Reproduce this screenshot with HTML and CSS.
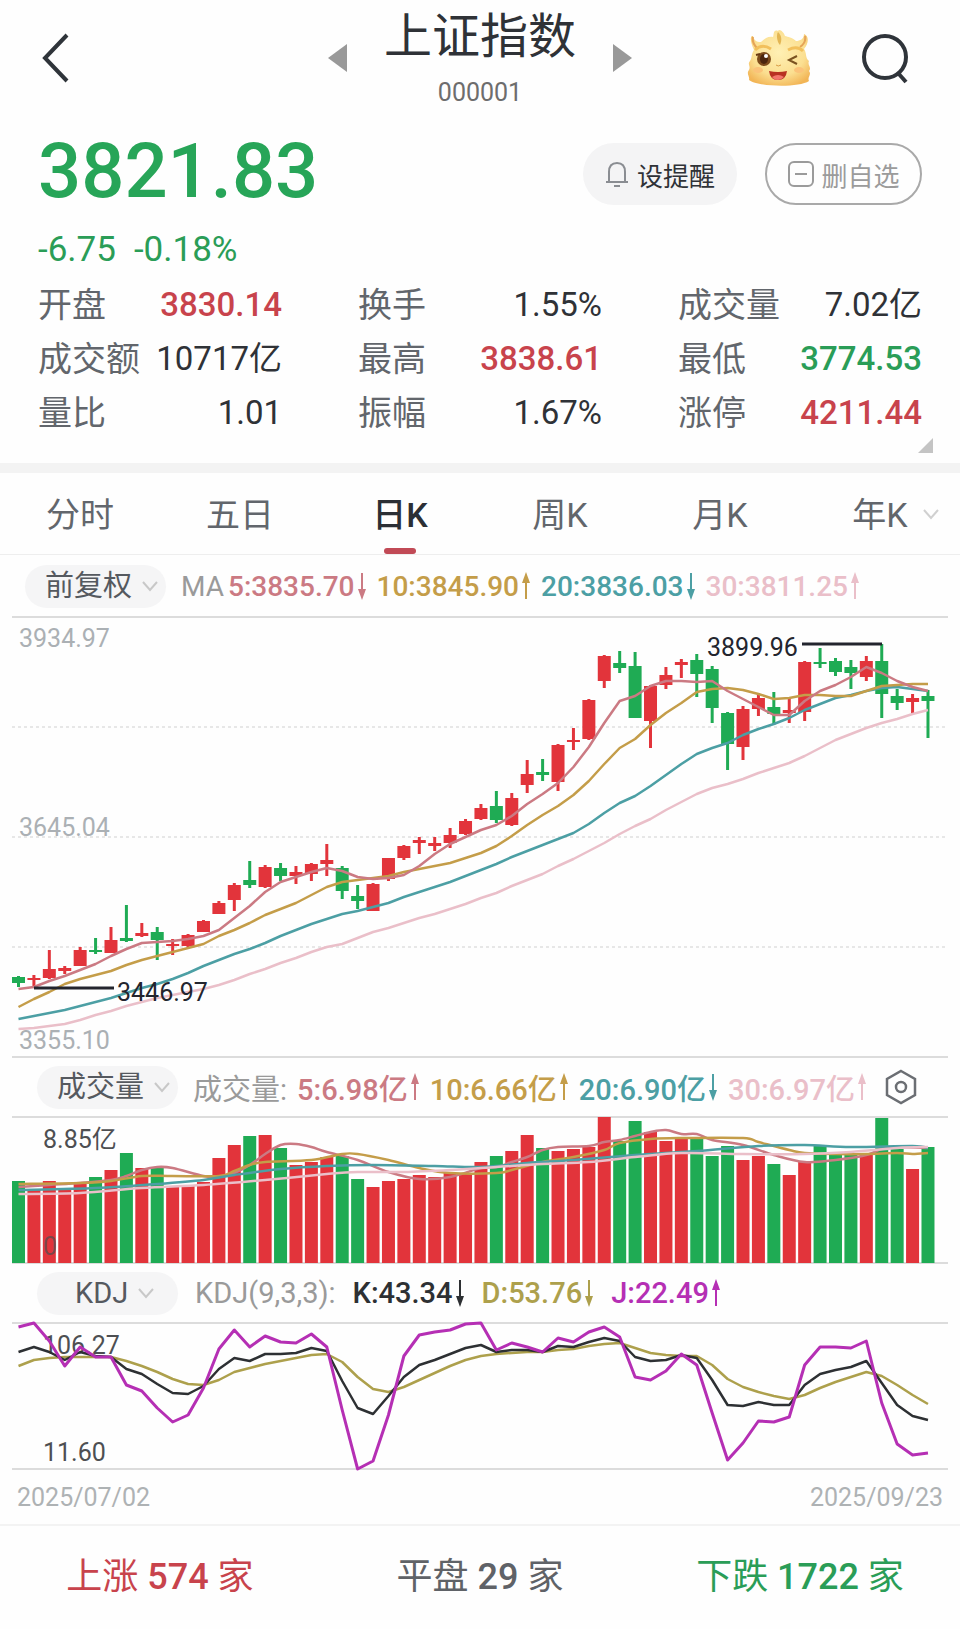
FILE: index.html
```html
<!DOCTYPE html>
<html lang="zh-CN">
<head>
  <meta charset="UTF-8">
  <meta name="viewport" content="width=device-width, initial-scale=1.0">
  <title>上证指数</title>
  <link rel="stylesheet" href="styles.css">
</head>
<body>
  <!-- shared icons -->
  <svg class="sprite" width="0" height="0" aria-hidden="true">
    <symbol id="arrow-up" viewBox="0 0 10 28">
      <path d="M5 4V27" stroke="currentColor" stroke-width="2"/>
      <path d="M5 0L9 11H1Z" fill="currentColor"/>
    </symbol>
    <symbol id="arrow-down" viewBox="0 0 10 28">
      <path d="M5 1V24" stroke="currentColor" stroke-width="2"/>
      <path d="M5 28L9 17H1Z" fill="currentColor"/>
    </symbol>
    <symbol id="chevron" viewBox="0 0 18 12">
      <path d="M2 2L9 10L16 2" fill="none" stroke="currentColor" stroke-width="2"/>
    </symbol>
  </svg>

  <header class="topbar">
    <button class="icon-btn back" type="button" aria-label="返回">
      <svg width="32" height="52" viewBox="0 0 32 52"><path d="M27 3L5 26L27 49" fill="none" stroke="#2f343a" stroke-width="4"/></svg>
    </button>
    <div class="switcher">
      <button class="icon-btn" type="button" aria-label="上一个">
        <svg width="20" height="28" viewBox="0 0 20 28"><path d="M19 0V28L0 14Z" fill="#999"/></svg>
      </button>
      <div class="name">
        <h1>上证指数</h1>
        <p>000001</p>
      </div>
      <button class="icon-btn" type="button" aria-label="下一个">
        <svg width="20" height="28" viewBox="0 0 20 28"><path d="M1 0V28L20 14Z" fill="#999"/></svg>
      </button>
    </div>
    <div class="tools">
      <button class="icon-btn" type="button" aria-label="助手">
        <svg width="66" height="62" viewBox="0 0 66 62">
          <defs>
            <radialGradient id="face" cx="0.5" cy="0.4" r="0.65">
              <stop offset="0" stop-color="#fff0b4"/>
              <stop offset="0.65" stop-color="#fbdf91"/>
              <stop offset="1" stop-color="#f2b556"/>
            </radialGradient>
          </defs>
          <path d="M7 9C4 8 4 15 8 23C5 27 6 32 4 34C1 37 5 39 3 43C0 47 4 49 3 53C12 60 53 61 63 54C61 50 66 48 63 44C66 40 61 38 63 34C59 31 61 26 58 22C63 16 63 9 58 7C58 12 54 14 50 14C46 10 42 10 39 9C38 5 33 1 32 4C27 2 28 8 27 10C22 9 18 12 15 15C10 15 8 13 7 9Z" fill="url(#face)"/>
          <path d="M32 5C30 8 31 15 34 18C36 13 36 9 32 5Z" fill="#e3b653"/>
          <path d="M7 10C6 15 8 18 11 21M59 9C60 14 57 18 54 20" fill="none" stroke="#e5a458" stroke-width="2"/>
          <path d="M9 23Q16 16 25 22M42 23Q51 18 57 24" fill="none" stroke="#f2c05c" stroke-width="3"/>
          <ellipse cx="18" cy="32" rx="7" ry="7" fill="#7c4a1a"/>
          <ellipse cx="18" cy="32" rx="4" ry="5" fill="#4b250d"/>
          <circle cx="20" cy="29" r="2" fill="#fff"/>
          <path d="M10 28L14 27" stroke="#6b3a12" stroke-width="2"/>
          <path d="M51 29L43 33L51 37" fill="none" stroke="#7a5220" stroke-width="2"/>
          <ellipse cx="12" cy="43" rx="5" ry="3" fill="#fbc379"/>
          <ellipse cx="53" cy="43" rx="5" ry="3" fill="#fbc379"/>
          <path d="M30 38Q32 40 35 38" fill="none" stroke="#d99b45" stroke-width="1"/>
          <path d="M23 44Q32 46 41 44Q40 53 32 53Q24 53 23 44Z" fill="#b83222"/>
          <path d="M26 50Q32 46 38 50Q35 53 32 53Q28 53 26 50Z" fill="#f2766b"/>
        </svg>
      </button>
      <button class="icon-btn" type="button" aria-label="搜索">
        <svg width="52" height="54" viewBox="0 0 52 54">
          <circle cx="25" cy="26" r="21" fill="none" stroke="#2f343a" stroke-width="4"/>
          <path d="M38 42L46 51" stroke="#2f343a" stroke-width="4"/>
        </svg>
      </button>
    </div>
  </header>

  <section class="quote">
    <div class="quote-main">
      <strong class="price">3821.83</strong>
      <button class="pill-btn remind" type="button">
        <svg width="24" height="28" viewBox="0 0 24 28" fill="none" stroke="#8a8d92" stroke-width="2">
          <path d="M1 22H23M4 22V12C4 6 7 3 12 3C17 3 20 6 20 12V22M9 26H15"/>
        </svg>
        设提醒
      </button>
      <button class="pill-btn remove" type="button">
        <svg width="28" height="28" viewBox="0 0 28 28" fill="none" stroke="#9b9b9b" stroke-width="2">
          <rect x="2" y="2" width="24" height="24" rx="5"/><path d="M8 14H20"/>
        </svg>
        删自选
      </button>
    </div>
    <p class="change"><span>-6.75</span><span>-0.18%</span></p>
    <dl class="stats">
      <div><dt>开盘</dt><dd class="up">3830.14</dd></div>
      <div><dt>换手</dt><dd>1.55%</dd></div>
      <div><dt>成交量</dt><dd>7.02亿</dd></div>
      <div><dt>成交额</dt><dd>10717亿</dd></div>
      <div><dt>最高</dt><dd class="up">3838.61</dd></div>
      <div><dt>最低</dt><dd class="down">3774.53</dd></div>
      <div><dt>量比</dt><dd>1.01</dd></div>
      <div><dt>振幅</dt><dd>1.67%</dd></div>
      <div><dt>涨停</dt><dd class="up">4211.44</dd></div>
    </dl>
    <button class="icon-btn expand" type="button" aria-label="更多">
      <svg width="15" height="15" viewBox="0 0 15 15"><path d="M15 0V15H0Z" fill="#c4c4c4"/></svg>
    </button>
  </section>

  <nav class="tabs">
    <a href="#">分时</a>
    <a href="#">五日</a>
    <a href="#" class="active">日K</a>
    <a href="#">周K</a>
    <a href="#">月K</a>
    <a href="#">年K<svg class="tab-more" width="18" height="12"><use href="#chevron"/></svg></a>
  </nav>

  <main class="charts">
    <div class="legend legend-ma">
      <label class="picker">
        <select aria-label="复权方式"><option>前复权</option><option>后复权</option></select>
        <svg width="18" height="12"><use href="#chevron"/></svg>
      </label>
      <span class="muted">MA</span>
      <span class="ma5">5:3835.70<svg class="arrow"><use href="#arrow-down"/></svg></span>
      <span class="ma10">10:3845.90<svg class="arrow"><use href="#arrow-up"/></svg></span>
      <span class="ma20">20:3836.03<svg class="arrow"><use href="#arrow-down"/></svg></span>
      <span class="ma30">30:3811.25<svg class="arrow"><use href="#arrow-up"/></svg></span>
    </div>
    <svg id="kline" class="chart" viewBox="0 0 936 440">
      <path class="frame" d="M0 0H936M0 440H936"/>
      <path class="grid" d="M0 110H936M0 220H936M0 330H936"/>
      <g class="axis">
        <text x="7" y="30">3934.97</text>
        <text x="7" y="219">3645.04</text>
        <text x="7" y="432">3355.10</text>
      </g>
      <g class="plot"></g>
      <path class="mark" d="M22 371H102M790 27H870"/>
      <text class="mark-text" x="105" y="384">3446.97</text>
      <text class="mark-text" x="695" y="39">3899.96</text>
    </svg>

    <div class="legend legend-vol">
      <label class="picker">
        <select aria-label="副图指标一"><option>成交量</option><option>成交额</option></select>
        <svg width="18" height="12"><use href="#chevron"/></svg>
      </label>
      <span class="muted">成交量:</span>
      <span class="ma5">5:6.98亿<svg class="arrow"><use href="#arrow-up"/></svg></span>
      <span class="ma10">10:6.66亿<svg class="arrow"><use href="#arrow-up"/></svg></span>
      <span class="ma20">20:6.90亿<svg class="arrow"><use href="#arrow-down"/></svg></span>
      <span class="ma30">30:6.97亿<svg class="arrow"><use href="#arrow-up"/></svg></span>
      <button class="icon-btn settings" type="button" aria-label="指标设置">
        <svg width="34" height="36" viewBox="0 0 34 36" fill="none" stroke="#6b6e73" stroke-width="2.5">
          <path d="M17 2L31 10V26L17 34L3 26V10Z"/><circle cx="17" cy="18" r="5"/>
        </svg>
      </button>
    </div>
    <svg id="volume" class="chart" viewBox="0 0 936 146">
      <path class="frame" d="M0 0H936M0 146H936"/>
      <g class="plot"></g>
      <text class="scale" x="31" y="31">8.85亿</text>
      <text class="scale zero" x="31" y="138">0</text>
    </svg>

    <div class="legend legend-kdj">
      <label class="picker picker-short">
        <select aria-label="副图指标二"><option>KDJ</option><option>MACD</option></select>
        <svg width="18" height="12"><use href="#chevron"/></svg>
      </label>
      <span class="muted">KDJ(9,3,3):</span>
      <span class="k">K:43.34<svg class="arrow"><use href="#arrow-down"/></svg></span>
      <span class="d">D:53.76<svg class="arrow"><use href="#arrow-down"/></svg></span>
      <span class="j">J:22.49<svg class="arrow"><use href="#arrow-up"/></svg></span>
    </div>
    <svg id="kdj" class="chart" viewBox="0 0 936 146">
      <path class="frame" d="M0 0H936M0 146H936"/>
      <text class="scale" x="31" y="31">106.27</text>
      <text class="scale" x="31" y="138">11.60</text>
      <g class="plot"></g>
    </svg>
    <div class="dates"><time>2025/07/02</time><time>2025/09/23</time></div>
  </main>

  <footer class="breadth">
    <span class="up">上涨 <b>574</b> 家</span>
    <span>平盘 <b>29</b> 家</span>
    <span class="down">下跌 <b>1722</b> 家</span>
  </footer>

  <script src="chart.js"></script>
</body>
</html>
```
FILE: styles.css
```css
* {
  box-sizing: border-box;
}

body {
  margin: 0;
  background-color: #fefefe;
  color: #2f3237;
  font-family: Roboto, "Noto Sans CJK SC", sans-serif;
}

h1, p, dl, dd {
  margin: 0;
}

button {
  font-family: inherit;
  cursor: pointer;
}

.sprite {
  position: absolute;
}

.icon-btn {
  display: flex;
  padding: 0;
  border: none;
  background: none;
}

.up {
  color: #c8434c;
}

.down {
  color: #2a9d57;
}

/* Top bar */
.topbar {
  display: grid;
  grid-template-columns: 1fr auto 1fr;
  align-items: center;
  height: 116px;
  padding: 0 48px 0 40px;
}

.switcher {
  display: flex;
  align-items: center;
  gap: 36px;
  margin-left: 8px;
}

.name {
  text-align: center;
}

.name h1 {
  font-size: 48px;
  line-height: 60px;
  font-weight: 400;
}

.name p {
  margin-top: 10px;
  font-size: 25px;
  line-height: 32px;
  color: #6d6d6d;
}

.tools {
  display: flex;
  align-items: center;
  justify-content: flex-end;
  gap: 48px;
}

/* Quote */
.quote {
  position: relative;
  padding: 0 38px 23px;
  border-bottom: 10px solid #f3f3f3;
}

.quote-main {
  display: flex;
  align-items: center;
  height: 110px;
}

.price {
  margin-right: auto;
  font-size: 76px;
  font-weight: 500;
  color: #27a558;
}

.pill-btn {
  display: flex;
  align-items: center;
  justify-content: center;
  gap: 8px;
  height: 62px;
  margin-top: 6px;
  border: 2px solid transparent;
  border-radius: 31px;
  font-size: 26px;
}

.remind {
  width: 154px;
  margin-right: 28px;
  background-color: #f4f4f5;
  color: #2f3237;
}

.remove {
  width: 157px;
  gap: 6px;
  border-color: #a9a9a9;
  background: none;
  color: #9b9b9b;
}

.change {
  display: flex;
  gap: 18px;
  font-size: 35px;
  line-height: 48px;
  color: #2a9d57;
}

.stats {
  display: grid;
  grid-template-columns: repeat(3, 1fr);
  column-gap: 76px;
  margin-top: 4px;
}

.stats div {
  display: flex;
  justify-content: space-between;
  font-size: 33px;
  line-height: 54px;
}

.stats dt {
  font-size: 34px;
  color: #62666c;
}

.stats .up,
.stats .down {
  font-weight: 500;
}

.expand {
  position: absolute;
  right: 27px;
  bottom: 10px;
}

/* Period tabs */
.tabs {
  display: grid;
  grid-template-columns: repeat(6, 1fr);
  border-bottom: 1px solid #eee;
}

.tabs a {
  position: relative;
  padding-top: 3px;
  font-size: 34px;
  line-height: 78px;
  text-align: center;
  text-decoration: none;
  color: #62666c;
}

.tabs .active {
  font-weight: 500;
  color: #2b2f35;
}

.tabs .active::after {
  content: "";
  position: absolute;
  left: 50%;
  bottom: 0;
  width: 32px;
  height: 6px;
  margin-left: -16px;
  border-radius: 3px;
  background-color: #c14a56;
}

.tab-more {
  position: absolute;
  right: 20px;
  top: 35px;
  color: #d0d0d0;
}

/* Charts */
.charts {
  padding: 0 12px;
}

.legend {
  display: flex;
  align-items: center;
  gap: 10px;
  height: 60px;
  padding-left: 25px;
  font-size: 28px;
  white-space: nowrap;
}

.legend-ma {
  height: 62px;
  padding-left: 13px;
}

.legend-vol {
  font-size: 29px;
}

.legend-kdj {
  gap: 17px;
  font-size: 29px;
}

.legend span {
  display: flex;
  align-items: center;
}

.arrow {
  width: 10px;
  height: 28px;
  margin-left: 2px;
}

.picker {
  display: grid;
  align-items: center;
  width: 141px;
  margin-right: 5px;
}

.legend-kdj .picker {
  margin-right: 0;
}

.picker select {
  grid-area: 1 / 1;
  width: 100%;
  height: 43px;
  padding: 0 0 0 20px;
  border: none;
  border-radius: 22px;
  appearance: none;
  background-color: #f5f5f6;
  font-family: inherit;
  font-size: 29px;
  color: #55595f;
}

.picker svg {
  grid-area: 1 / 1;
  justify-self: end;
  margin-right: 7px;
  color: #c8c8c8;
  pointer-events: none;
}

.picker-short select {
  padding-left: 38px;
}

.picker-short svg {
  margin-right: 23px;
}

.settings {
  margin-left: auto;
  margin-right: 30px;
}

.muted { color: #9a9a9a; }
.ma5 { color: #cb7a83; }
.ma10 { color: #c49d49; }
.ma20 { color: #4c9fa4; }
.ma30 { color: #eabfc9; }
.k { color: #2d3033; }
.d { color: #ada04c; }
.j { color: #b52fb4; }

.legend-ma .muted {
  margin-right: -6px;
}

.legend span:not(.muted) {
  font-weight: 500;
}

.chart {
  display: block;
  width: 100%;
  height: auto;
  overflow: visible;
  font-size: 25px;
}

.chart .frame {
  fill: none;
  stroke: #dcdcdc;
  stroke-width: 2;
}

.chart .grid {
  fill: none;
  stroke: #d0d0d0;
  stroke-dasharray: 3 3;
}

.chart .axis {
  fill: #abb0b4;
}

.chart .mark {
  fill: none;
  stroke: #23252e;
  stroke-width: 3;
}

.chart .mark-text {
  fill: #23252e;
}

.chart .scale {
  fill: #4d4f52;
}

.chart .zero {
  fill-opacity: 0.7;
}

.rise { fill: #e2343b; stroke: #e2343b; }
.fall { fill: #1fab54; stroke: #1fab54; }

.wick {
  stroke-width: 3;
}

.body {
  stroke: none;
}

.line {
  fill: none;
  stroke: currentColor;
  stroke-width: 2.5;
  stroke-linejoin: round;
}

.line.j {
  stroke-width: 3;
}

.dates {
  display: flex;
  justify-content: space-between;
  padding: 3px 5px 0;
  font-size: 25px;
  line-height: 52px;
  color: #aeb2b4;
}

/* Market breadth */
.breadth {
  display: grid;
  grid-template-columns: repeat(3, 1fr);
  border-top: 2px solid #f3f3f3;
  font-size: 36px;
  line-height: 102px;
  text-align: center;
  color: #5f6267;
}

.breadth b {
  font-weight: 500;
}
```
FILE: chart.js
```js
const STEP = 15.415;
const LEFT = 6.5;
const BAR = 13;

// direction, high, body top, body bottom, low (chart units, from the top)
const candles = [
  ['g', 359, 360, 366, 370], ['r', 358, 361, 363, 370], ['r', 333, 352, 361, 362], ['r', 349, 351, 354, 357],
  ['r', 330, 333, 349, 349], ['g', 321, 333, 335, 337], ['r', 310, 323, 336, 336], ['g', 288, 321, 324, 325],
  ['r', 306, 316, 319, 320], ['g', 310, 315, 323, 343], ['r', 322, 327, 329, 338], ['r', 317, 318, 329, 330],
  ['r', 303, 304, 315, 315], ['r', 284, 286, 297, 297], ['r', 266, 268, 283, 294], ['g', 244, 263, 268, 271],
  ['r', 248, 250, 270, 271], ['g', 246, 251, 259, 264], ['r', 249, 255, 259, 267], ['r', 246, 247, 257, 264],
  ['r', 227, 243, 247, 259], ['g', 249, 251, 274, 282], ['g', 268, 279, 284, 292], ['r', 266, 267, 294, 294],
  ['r', 241, 241, 262, 264], ['r', 228, 229, 241, 243], ['r', 220, 223, 226, 237], ['r', 220, 226, 229, 234],
  ['r', 211, 218, 226, 231], ['r', 202, 204, 217, 218], ['r', 187, 191, 202, 203], ['g', 174, 189, 203, 206],
  ['r', 176, 181, 208, 209], ['r', 143, 157, 168, 176], ['g', 142, 155, 158, 164], ['r', 127, 128, 165, 174],
  ['r', 111, 123, 125, 133], ['r', 82, 83, 122, 123], ['r', 38, 39, 64, 71], ['g', 34, 46, 51, 56],
  ['g', 35, 49, 101, 101], ['r', 68, 69, 104, 131], ['r', 50, 58, 68, 72], ['r', 42, 45, 48, 61],
  ['g', 37, 43, 57, 80], ['g', 49, 52, 91, 106], ['g', 95, 96, 127, 153], ['r', 89, 92, 130, 143],
  ['r', 78, 81, 92, 99], ['g', 75, 90, 97, 108], ['r', 81, 93, 96, 106], ['r', 44, 45, 95, 104],
  ['g', 31, 45, 47, 51], ['g', 41, 44, 55, 59], ['g', 43, 50, 56, 72], ['r', 39, 44, 60, 64],
  ['g', 27, 44, 77, 101], ['g', 72, 79, 86, 93], ['r', 77, 81, 85, 97], ['g', 73, 79, 84, 121]
];

const priceLines = {
  ma30: [412, 411, 409, 407, 403, 398, 394, 389, 385, 381, 378, 375, 372, 368, 363, 357, 352, 346, 341, 335,
    330, 327, 321, 315, 311, 306, 301, 297, 292, 287, 281, 276, 269, 263, 257, 249, 242, 234, 226, 217,
    209, 202, 193, 185, 177, 171, 167, 162, 156, 151, 146, 139, 131, 123, 117, 111, 106, 102, 97, 93],
  ma20: [402, 399, 396, 393, 389, 385, 381, 376, 371, 367, 362, 356, 349, 343, 337, 332, 326, 319, 313, 307,
    302, 297, 294, 290, 286, 280, 275, 270, 265, 259, 253, 247, 240, 234, 228, 222, 216, 207, 196, 186,
    179, 169, 158, 147, 137, 131, 126, 118, 112, 107, 101, 93, 87, 81, 78, 74, 71, 70, 72, 74],
  ma10: [390, 382, 375, 367, 362, 358, 354, 348, 343, 339, 335, 331, 327, 319, 313, 306, 298, 292, 286, 278,
    270, 265, 263, 261, 259, 255, 252, 249, 246, 241, 236, 229, 219, 208, 198, 189, 178, 164, 147, 131,
    122, 108, 96, 86, 75, 72, 71, 73, 77, 82, 81, 78, 78, 79, 79, 74, 69, 68, 67, 67],
  ma5: [372, 370, 364, 359, 353, 347, 339, 332, 326, 325, 324, 322, 319, 313, 301, 289, 275, 265, 260, 255,
    251, 254, 260, 262, 261, 258, 249, 237, 227, 220, 213, 208, 199, 187, 177, 166, 150, 130, 106, 84,
    79, 69, 64, 64, 65, 64, 74, 82, 90, 98, 98, 84, 74, 68, 60, 50, 56, 64, 70, 74]
};

const volumeTops = [64, 72, 64, 72, 65, 60, 53, 36, 51, 51, 69, 69, 65, 41, 28, 19, 18, 31, 48, 45,
  40, 39, 62, 70, 64, 62, 58, 60, 56, 57, 45, 39, 34, 18, 31, 34, 32, 30, 0, 24,
  4, 15, 24, 22, 20, 39, 29, 43, 39, 47, 58, 45, 28, 38, 38, 38, 1, 32, 52, 30];

// [day index, y]
const volumeLines = {
  ma5: [[0, 70], [2, 68], [4, 66], [6, 63], [7, 59], [8, 53], [9, 50], [10, 51], [12, 59], [13, 60], [14, 56],
    [15, 48], [16, 37], [17, 28], [18, 27], [19, 30], [20, 35], [22, 43], [24, 55], [26, 62], [28, 60], [30, 51],
    [31, 50], [32, 45], [33, 40], [34, 33], [35, 30], [37, 29], [38, 25], [39, 23], [40, 19], [41, 15], [42, 13],
    [43, 17], [44, 17], [45, 23], [47, 28], [49, 38], [51, 45], [53, 43], [55, 38], [56, 32], [57, 30], [59, 31]],
  ma10: [[0, 67], [4, 66], [6, 64], [8, 59], [10, 59], [13, 59], [14, 54], [15, 48], [16, 45], [19, 43], [21, 37],
    [22, 37], [24, 43], [26, 51], [28, 56], [31, 56], [32, 53], [34, 45], [36, 40], [38, 33], [39, 26], [41, 22],
    [43, 21], [47, 21], [48, 25], [50, 33], [51, 36], [53, 37], [55, 37], [57, 36], [58, 37], [59, 36]],
  ma20: [[0, 73], [5, 71], [9, 67], [12, 63], [14, 58], [17, 52], [20, 49], [23, 48], [27, 49], [30, 50], [33, 46],
    [36, 43], [40, 38], [44, 34], [48, 29], [51, 28], [54, 30], [58, 29], [59, 31]],
  ma30: [[0, 77], [4, 76], [8, 71], [12, 68], [16, 63], [20, 57], [22, 55], [25, 55], [28, 53], [31, 50], [34, 47],
    [37, 45], [40, 40], [43, 36], [47, 37], [51, 37], [54, 35], [57, 31], [59, 30]]
};

const kdjLines = {
  d: [43, 37, 35, 34, 34, 34, 34, 38, 43, 49, 56, 61, 62, 57, 49, 45, 41, 38, 35, 32,
    31, 39, 54, 66, 69, 64, 57, 50, 43, 37, 33, 31, 30, 29, 29, 27, 26, 23, 21, 20,
    25, 30, 32, 33, 33, 42, 56, 64, 69, 73, 76, 72, 65, 59, 54, 49, 53, 62, 72, 81],
  k: [29, 24, 29, 37, 29, 33, 34, 46, 51, 61, 70, 71, 63, 46, 35, 38, 31, 31, 30, 25,
    28, 58, 85, 91, 73, 54, 42, 37, 31, 25, 22, 29, 27, 27, 29, 23, 24, 19, 15, 18,
    34, 38, 37, 32, 35, 57, 82, 83, 79, 82, 82, 62, 51, 47, 44, 38, 60, 82, 93, 97],
  j: [4, 0, 18, 43, 24, 34, 34, 62, 68, 85, 99, 92, 65, 26, 7, 24, 13, 19, 20, 11,
    24, 87, 146, 138, 92, 33, 12, 9, 7, 1, 0, 27, 20, 24, 29, 15, 19, 9, 4, 14,
    54, 57, 48, 31, 42, 90, 137, 120, 98, 99, 94, 42, 24, 24, 25, 18, 80, 121, 132, 130]
};

const x = (i) => LEFT + i * STEP;

function linePath(values) {
  return values.map((y, i) => `${i ? 'L' : 'M'}${x(i)} ${y}`).join('');
}

// smooth curve through the given points
function curvePath(points) {
  const p = points.map(([i, y]) => [x(i), y]);
  let d = `M${p[0][0]} ${p[0][1]}`;
  for (let i = 0; i < p.length - 1; i++) {
    const a = p[i];
    const b = p[i + 1];
    const before = p[i - 1] || a;
    const after = p[i + 2] || b;
    d += `C${a[0] + (b[0] - before[0]) / 6} ${a[1] + (b[1] - before[1]) / 6} `
      + `${b[0] - (after[0] - a[0]) / 6} ${b[1] - (after[1] - a[1]) / 6} ${b[0]} ${b[1]}`;
  }
  return d;
}

function drawLines(lines, toPath) {
  return Object.keys(lines).map((name) => `<path class="line ${name}" d="${toPath(lines[name])}"/>`).join('');
}

const tone = (dir) => (dir === 'r' ? 'rise' : 'fall');

document.querySelector('#kline .plot').innerHTML = candles.map(([dir, high, top, bottom, low], i) =>
  `<g class="${tone(dir)}"><path class="wick" d="M${x(i)} ${high}V${low}"/>` +
  `<rect class="body" x="${x(i) - BAR / 2}" y="${top}" width="${BAR}" height="${bottom - top}"/></g>`
).join('') + drawLines(priceLines, linePath);

document.querySelector('#volume .plot').innerHTML = volumeTops.map((top, i) =>
  `<rect class="body ${tone(candles[i][0])}" x="${x(i) - BAR / 2}" y="${top}" width="${BAR}" height="${146 - top}"/>`
).join('') + drawLines(volumeLines, curvePath);

document.querySelector('#kdj .plot').innerHTML = drawLines(kdjLines, linePath);
```
